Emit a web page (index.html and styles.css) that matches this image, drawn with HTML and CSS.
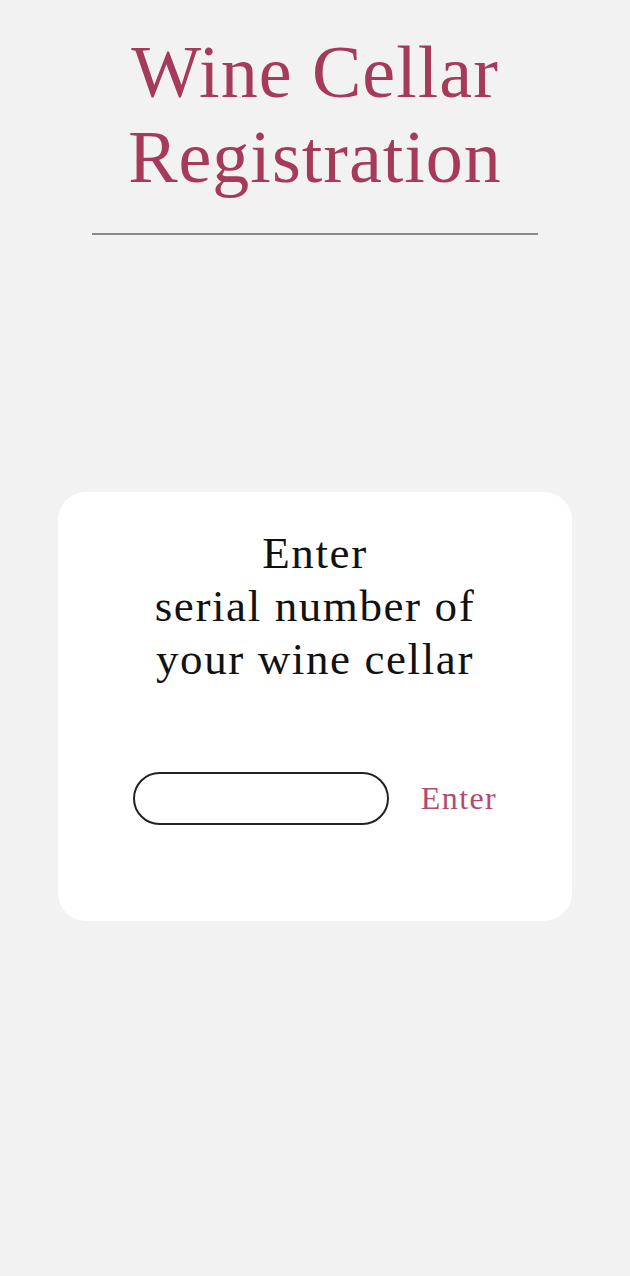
FILE: index.html
```html
<!DOCTYPE html>
<html lang="en">
<head>
<meta charset="utf-8">
<title>Wine Cellar Registration</title>
<link rel="stylesheet" href="styles.css">
</head>
<body>
<div class="page">
  <header class="header">
    <h1 class="title">Wine Cellar<br>Registration</h1>
    <hr class="divider">
  </header>
  <main class="card">
    <p class="prompt">Enter<br>serial number of<br>your wine cellar</p>
    <div class="row">
      <input class="serial" type="text" aria-label="Serial number">
      <button class="enter" type="button">Enter</button>
    </div>
  </main>
</div>
</body>
</html>
```
FILE: styles.css
```css
html, body {
  margin: 0;
  padding: 0;
  background: #f2f2f2;
}
body {
  font-family: "Liberation Serif", "Times New Roman", serif;
  width: 630px;
  height: 1276px;
  overflow: hidden;
}
.page {
  display: flex;
  flex-direction: column;
  align-items: center;
  padding-top: 30px;
}
.header {
  display: flex;
  flex-direction: column;
  align-items: center;
}
.title {
  margin: 0;
  font-weight: normal;
  font-size: 74px;
  line-height: 85px;
  letter-spacing: 1px;
  color: #a63a5b;
  text-align: center;
}
.divider {
  margin: 33px 0 0 0;
  width: 446px;
  height: 2px;
  border: 0;
  background: #8a8a8a;
}
.card {
  margin-top: 257px;
  width: 514px;
  height: 429px;
  box-sizing: border-box;
  padding-top: 35px;
  background: #ffffff;
  border-radius: 28px;
  display: flex;
  flex-direction: column;
  align-items: center;
}
.prompt {
  margin: 0;
  font-size: 45px;
  line-height: 53px;
  letter-spacing: 1.6px;
  color: #111111;
  text-align: center;
}
.row {
  margin-top: 86px;
  display: flex;
  align-items: center;
  gap: 32px;
}
.serial {
  width: 256px;
  height: 53px;
  box-sizing: border-box;
  border: 2px solid #222222;
  border-radius: 27px;
  background: #ffffff;
  padding: 0 20px;
  font-family: inherit;
  font-size: 24px;
  outline: none;
}
.enter {
  border: 0;
  background: none;
  padding: 0;
  font-family: inherit;
  font-size: 32px;
  letter-spacing: 1.4px;
  color: #b44a6d;
  cursor: pointer;
}
```
